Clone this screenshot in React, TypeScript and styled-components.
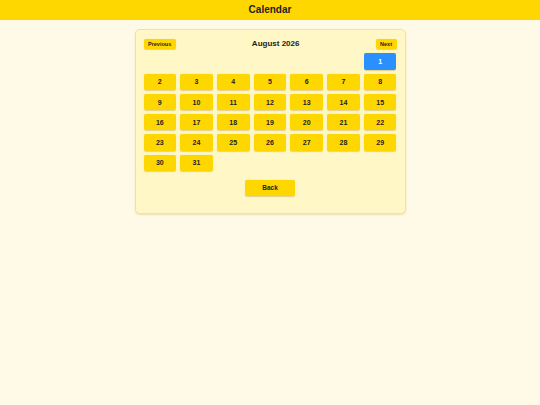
import React, { useState } from "react";
import styled, { createGlobalStyle } from "styled-components";

const GlobalStyle = createGlobalStyle`
  html, body {
    margin: 0;
    padding: 0;
    background: #fffae8;
    font-family: "Liberation Sans", Arial, sans-serif;
    color: #222;
  }
`;

const Page = styled.div`
  min-height: 405px;
  display: flex;
  flex-direction: column;
`;

const TopBar = styled.header`
  height: 20px;
  background: #ffd700;
  display: flex;
  align-items: center;
  justify-content: center;
`;

const AppTitle = styled.h1`
  margin: 0;
  font-size: 10px;
  font-weight: 700;
  line-height: 1;
`;

const Card = styled.section`
  box-sizing: border-box;
  width: 271px;
  margin: 9px auto 0;
  padding: 9px 8px 9px;
  background: #fff8c6;
  border: 1px solid #ffe27a;
  border-radius: 5px;
  box-shadow: 0 1px 2px rgba(180, 150, 0, 0.25);
`;

const MonthHeader = styled.div`
  display: flex;
  align-items: center;
  justify-content: space-between;
  height: 10px;
  margin-bottom: 4.3px;
`;

const NavButton = styled.button`
  height: 10px;
  padding: 0 4.5px;
  border: none;
  border-radius: 2px;
  background: #ffd700;
  color: #222;
  font-family: inherit;
  font-size: 5.5px;
  font-weight: 700;
  line-height: 10px;
  box-shadow: 0 0.5px 1px rgba(160, 120, 0, 0.3);
  cursor: pointer;
`;

const MonthTitle = styled.h2`
  margin: 0;
  font-size: 8px;
  font-weight: 700;
  line-height: 10px;
`;

const DayGrid = styled.div`
  display: grid;
  grid-template-columns: repeat(7, 1fr);
  column-gap: 4.2px;
  row-gap: 4px;
  grid-auto-rows: 16.3px;
`;

const DayButton = styled.button<{ $selected?: boolean }>`
  padding: 0;
  border: none;
  border-radius: 2px;
  background: ${(p) => (p.$selected ? "#2a8fff" : "#ffd700")};
  color: ${(p) => (p.$selected ? "#fff" : "#222")};
  font-family: inherit;
  font-size: 7px;
  font-weight: 700;
  box-shadow: 0 0.5px 1px rgba(160, 120, 0, 0.3);
  cursor: pointer;
`;

const Blank = styled.div``;

const Footer = styled.div`
  display: flex;
  justify-content: center;
  padding: 8.6px 0 8.7px;
`;

const BackButton = styled.button`
  width: 50px;
  height: 16px;
  padding: 0;
  border: none;
  border-radius: 2px;
  background: #ffd700;
  color: #222;
  font-family: inherit;
  font-size: 6.5px;
  font-weight: 700;
  box-shadow: 0 0.5px 1px rgba(160, 120, 0, 0.3);
  cursor: pointer;
`;

const MONTHS = [
  "January", "February", "March", "April", "May", "June",
  "July", "August", "September", "October", "November", "December",
];

export default function App() {
  const [year, setYear] = useState(2026);
  const [month, setMonth] = useState(7);
  const [selected, setSelected] = useState(1);

  const offset = new Date(year, month, 1).getDay();
  const days = new Date(year, month + 1, 0).getDate();

  const shift = (d: number) => {
    const next = new Date(year, month + d, 1);
    setYear(next.getFullYear());
    setMonth(next.getMonth());
  };

  return (
    <Page>
      <GlobalStyle />
      <TopBar>
        <AppTitle>Calendar</AppTitle>
      </TopBar>
      <Card>
        <MonthHeader>
          <NavButton onClick={() => shift(-1)}>Previous</NavButton>
          <MonthTitle>
            {MONTHS[month]} {year}
          </MonthTitle>
          <NavButton onClick={() => shift(1)}>Next</NavButton>
        </MonthHeader>
        <DayGrid>
          {Array.from({ length: offset }, (_, i) => (
            <Blank key={`b${i}`} />
          ))}
          {Array.from({ length: days }, (_, i) => (
            <DayButton
              key={i + 1}
              $selected={i + 1 === selected}
              onClick={() => setSelected(i + 1)}
            >
              {i + 1}
            </DayButton>
          ))}
        </DayGrid>
        <Footer>
          <BackButton>Back</BackButton>
        </Footer>
      </Card>
    </Page>
  );
}
